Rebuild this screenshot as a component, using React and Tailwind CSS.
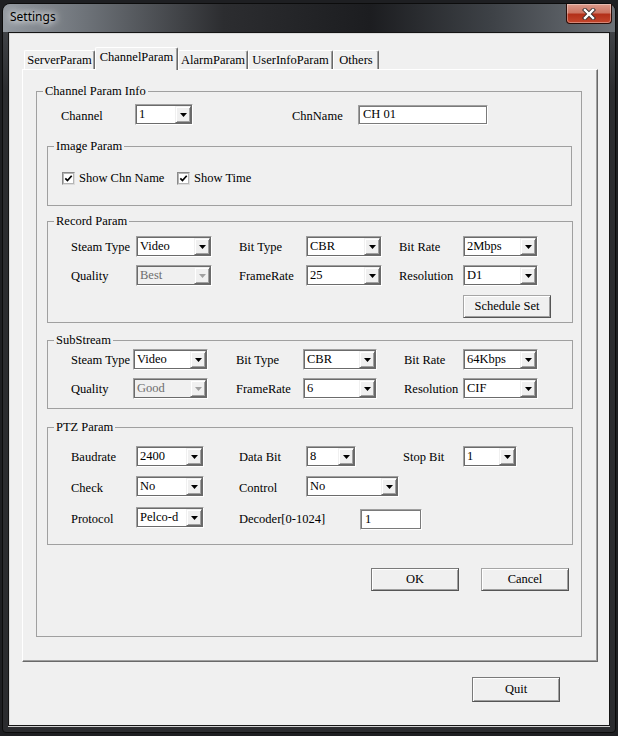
import React from "react";

const serif = "font-['Liberation_Serif','Times_New_Roman',serif]";

function Arrow({ disabled }) {
  return (
    <svg width="7" height="4" viewBox="0 0 7 4">
      <polygon points="0,0 7,0 3.5,4" fill={disabled ? "#a0a0a0" : "#000"} />
    </svg>
  );
}

function Combo({ className, value, disabled }) {
  return (
    <div className={`flex h-[21px] shrink-0 border border-t-[#a0a0a0] border-l-[#a0a0a0] border-b-white border-r-white ${className}`}>
      <div className={`flex flex-1 min-w-0 border border-[#6b6b6b] ${disabled ? "bg-[#f0f0f0] text-[#6d6d6d]" : "bg-white"}`}>
        <span className="flex-1 self-center overflow-hidden whitespace-nowrap pl-[2px] leading-[15px]">{value}</span>
        <span className="flex w-[16px] items-center justify-center border border-t-[#f0f0f0] border-l-[#f0f0f0] border-b-[#696969] border-r-[#696969] bg-[#f0f0f0] shadow-[inset_1px_1px_0_#fff,inset_-1px_-1px_0_#a0a0a0]">
          <Arrow disabled={disabled} />
        </span>
      </div>
    </div>
  );
}

function Edit({ className, value }) {
  return (
    <div className={`flex shrink-0 border border-t-[#a0a0a0] border-l-[#a0a0a0] border-b-white border-r-white ${className}`}>
      <div className="flex flex-1 items-center border border-[#7a7a7a] bg-white pl-[3px] leading-[15px]">{value}</div>
    </div>
  );
}

function Btn({ className, children }) {
  return (
    <div className={`flex shrink-0 items-center justify-center border border-[#7a7a7a] border-b-[#555] border-r-[#555] bg-[#f0f0f0] leading-[15px] shadow-[inset_1px_1px_0_#fff,inset_-1px_-1px_0_#a0a0a0] ${className}`}>
      {children}
    </div>
  );
}

function Check() {
  return (
    <span className="flex h-[13px] w-[13px] shrink-0 border border-t-[#8a8a8a] border-l-[#8a8a8a] border-b-[#dcdcdc] border-r-[#dcdcdc]">
      <span className="flex flex-1 items-center justify-center border border-[#b5b5b5] bg-white">
        <svg width="9" height="9" viewBox="0 0 9 9">
          <path d="M1.3 4.3 L3.5 6.6 L7.7 1.8" fill="none" stroke="#000" strokeWidth="1.7" />
        </svg>
      </span>
    </span>
  );
}

function Label({ className, children }) {
  return <span className={`shrink-0 whitespace-nowrap leading-[15px] ${className}`}>{children}</span>;
}

function Group({ title, className, children }) {
  return (
    <fieldset className={`border border-[#a0a0a0] ${className}`}>
      <legend className="ml-[6px] px-[2px] text-[12.5px] leading-[14px]">{title}</legend>
      {children}
    </fieldset>
  );
}

const tabs = [
  { name: "ServerParam", w: "w-[71px]" },
  { name: "ChannelParam", w: "w-[83px]", active: true },
  { name: "AlarmParam", w: "w-[70px]" },
  { name: "UserInfoParam", w: "w-[85px]" },
  { name: "Others", w: "w-[46px]" },
];

export default function App() {
  return (
    <div className={`h-[736px] w-[618px] overflow-hidden bg-[#1e1f22] pl-[2px] pt-[3px] text-[12.5px] text-black ${serif}`}>
      <div className="flex h-[730px] w-[614px] flex-col rounded-t-[8px] rounded-b-[4px] border border-[#0c0c0c] bg-[linear-gradient(180deg,#4a4d52_0%,#2b2c2f_12%,#2b2c2f_100%)]">
        {/* title bar */}
        <div className="flex h-[28px] shrink-0 justify-between rounded-t-[7px] bg-[linear-gradient(90deg,#949aa1_0%,#6c7177_14%,#2c2d30_36%,#1c1d20_60%,#3e4247_80%,#6c7177_100%)] pr-[3px]">
          <span className="self-center pb-[2px] pl-[7px] font-['Noto_Sans','Open_Sans',sans-serif] text-[12px] text-black [text-shadow:0_0_6px_#fff,0_0_10px_#fff]">
            Settings
          </span>
          <span className="flex h-[20px] w-[46px] items-center justify-center rounded-b-[4px] border border-t-0 border-[#2a0d08] bg-[linear-gradient(180deg,#dc9a8b_0%,#cc7664_45%,#b3301a_55%,#c5472d_100%)] shadow-[inset_0_0_0_1px_rgba(255,255,255,0.35)]">
            <svg width="14" height="12" viewBox="0 0 14 12">
              <path d="M3 2 L11 10 M11 2 L3 10" stroke="#3a3030" strokeWidth="4.2" strokeLinecap="square" />
              <path d="M3 2 L11 10 M11 2 L3 10" stroke="#fff" strokeWidth="2.4" strokeLinecap="square" />
            </svg>
          </span>
        </div>

        {/* client area */}
        <div className="ml-[5px] h-[694px] w-[602px] shrink-0 border border-[#151515] bg-[#f0f0f0] pl-[13px] pt-[14px] shadow-[inset_1px_1px_0_#dcdcdc,0_1px_0_#cfcfcf]">
          <div className="flex h-[22px] items-end pl-[2px]">
            {tabs.map((t) =>
              t.active ? (
                <div
                  key={t.name}
                  className={`relative z-10 -mb-px flex h-[23px] items-center justify-center rounded-t-[2px] border border-b-0 border-t-white border-l-white border-r-[#696969] bg-[#f0f0f0] pb-[3px] shadow-[inset_-1px_0_0_#a0a0a0] ${t.w}`}
                >
                  {t.name}
                </div>
              ) : (
                <div
                  key={t.name}
                  className={`flex h-[19px] items-center justify-center rounded-t-[2px] border border-b-0 border-t-white border-l-white border-r-[#696969] bg-[#f0f0f0] pt-[1px] shadow-[inset_-1px_0_0_#a0a0a0] ${t.w}`}
                >
                  {t.name}
                </div>
              )
            )}
          </div>

          {/* tab panel */}
          <div className="h-[593px] w-[576px] border border-t-white border-l-white border-b-[#696969] border-r-[#696969] pl-[13px] pt-[14px] shadow-[inset_-1px_-1px_0_#a0a0a0]">
            <Group title="Channel Param Info" className="w-[546px] pb-[45px]">
              <div className="mt-[6px] flex h-[21px] items-center pl-[24px]">
                <Label className="w-[74px] pt-[3px]">Channel</Label>
                <Combo className="w-[58px]" value="1" />
                <span className="w-[99px] shrink-0" />
                <Label className="w-[66px] pt-[3px]">ChnName</Label>
                <Edit className="h-[20px] w-[130px]" value="CH 01" />
              </div>

              <Group title="Image Param" className="ml-[10px] mt-[14px] w-[525px] pb-[20px]">
                <div className="mt-[19px] flex h-[13px] items-center pl-[14px]">
                  <span className="flex w-[115px] shrink-0 items-center gap-[4px]">
                    <Check />
                    <Label>Show Chn Name</Label>
                  </span>
                  <span className="flex items-center gap-[4px]">
                    <Check />
                    <Label>Show Time</Label>
                  </span>
                </div>
              </Group>

              <Group title="Record Param" className="ml-[10px] mt-[8px] w-[526px] pb-[4px]">
                <div className="mt-[8px] flex h-[21px] items-center pl-[23px]">
                  <Label className="w-[65px] pt-[2px]">Steam Type</Label>
                  <Combo className="w-[76px]" value="Video" />
                  <span className="w-[27px] shrink-0" />
                  <Label className="w-[67px] pt-[2px]">Bit Type</Label>
                  <Combo className="w-[76px]" value="CBR" />
                  <span className="w-[17px] shrink-0" />
                  <Label className="w-[64px] pt-[2px]">Bit Rate</Label>
                  <Combo className="w-[75px]" value="2Mbps" />
                </div>
                <div className="mt-[8px] flex h-[21px] items-center pl-[23px]">
                  <Label className="w-[65px] pt-[2px]">Quality</Label>
                  <Combo className="w-[76px]" value="Best" disabled />
                  <span className="w-[27px] shrink-0" />
                  <Label className="w-[67px] pt-[2px]">FrameRate</Label>
                  <Combo className="w-[76px]" value="25" />
                  <span className="w-[17px] shrink-0" />
                  <Label className="w-[64px] pt-[2px]">Resolution</Label>
                  <Combo className="w-[75px]" value="D1" />
                </div>
                <div className="mt-[9px] flex pl-[415px]">
                  <Btn className="h-[23px] w-[88px] border-[#a5a5a5] border-b-[#6a6a6a] border-r-[#6a6a6a]">Schedule Set</Btn>
                </div>
              </Group>

              <Group title="SubStream" className="ml-[10px] mt-[10px] w-[526px] pb-[9px]">
                <div className="mt-[2px] flex h-[21px] items-center pl-[23px]">
                  <Label className="w-[62px] pt-[2px]">Steam Type</Label>
                  <Combo className="w-[75px]" value="Video" />
                  <span className="w-[28px] shrink-0" />
                  <Label className="w-[67px] pt-[2px]">Bit Type</Label>
                  <Combo className="w-[74px]" value="CBR" />
                  <span className="w-[27px] shrink-0" />
                  <Label className="w-[59px] pt-[2px]">Bit Rate</Label>
                  <Combo className="w-[75px]" value="64Kbps" />
                </div>
                <div className="mt-[8px] flex h-[21px] items-center pl-[23px]">
                  <Label className="w-[62px] pt-[2px]">Quality</Label>
                  <Combo className="w-[75px]" value="Good" disabled />
                  <span className="w-[28px] shrink-0" />
                  <Label className="w-[67px] pt-[2px]">FrameRate</Label>
                  <Combo className="w-[74px]" value="6" />
                  <span className="w-[27px] shrink-0" />
                  <Label className="w-[59px] pt-[2px]">Resolution</Label>
                  <Combo className="w-[75px]" value="CIF" />
                </div>
              </Group>

              <Group title="PTZ Param" className="ml-[10px] mt-[11px] w-[526px] pb-[16px]">
                <div className="mt-[12px] flex h-[21px] items-center pl-[23px]">
                  <Label className="w-[65px] pt-[2px]">Baudrate</Label>
                  <Combo className="w-[68px]" value="2400" />
                  <span className="w-[35px] shrink-0" />
                  <Label className="w-[67px] pt-[2px]">Data Bit</Label>
                  <Combo className="w-[50px]" value="8" />
                  <span className="w-[47px] shrink-0" />
                  <Label className="w-[60px] pt-[2px]">Stop Bit</Label>
                  <Combo className="w-[54px]" value="1" />
                </div>
                <div className="mt-[9px] flex h-[21px] items-center pl-[23px]">
                  <Label className="w-[65px] pt-[4px]">Check</Label>
                  <Combo className="w-[68px]" value="No" />
                  <span className="w-[35px] shrink-0" />
                  <Label className="w-[67px] pt-[4px]">Control</Label>
                  <Combo className="w-[93px]" value="No" />
                </div>
                <div className="mt-[10px] flex h-[21px] items-center pl-[23px]">
                  <Label className="w-[65px] pt-[4px]">Protocol</Label>
                  <Combo className="w-[68px]" value="Pelco-d" />
                  <span className="w-[35px] shrink-0" />
                  <Label className="w-[121px] pt-[3px]">Decoder[0-1024]</Label>
                  <Edit className="mt-[4px] h-[21px] w-[62px]" value="1" />
                </div>
              </Group>

              <div className="mt-[23px] flex justify-end gap-[22px] pr-[12px]">
                <Btn className="h-[23px] w-[88px]">OK</Btn>
                <Btn className="h-[23px] w-[88px] border-[#a5a5a5] border-b-[#6a6a6a] border-r-[#6a6a6a]">Cancel</Btn>
              </div>
            </Group>
          </div>

          <div className="mt-[15px] pl-[450px]">
            <Btn className="h-[25px] w-[88px]">Quit</Btn>
          </div>
        </div>
      </div>
    </div>
  );
}
